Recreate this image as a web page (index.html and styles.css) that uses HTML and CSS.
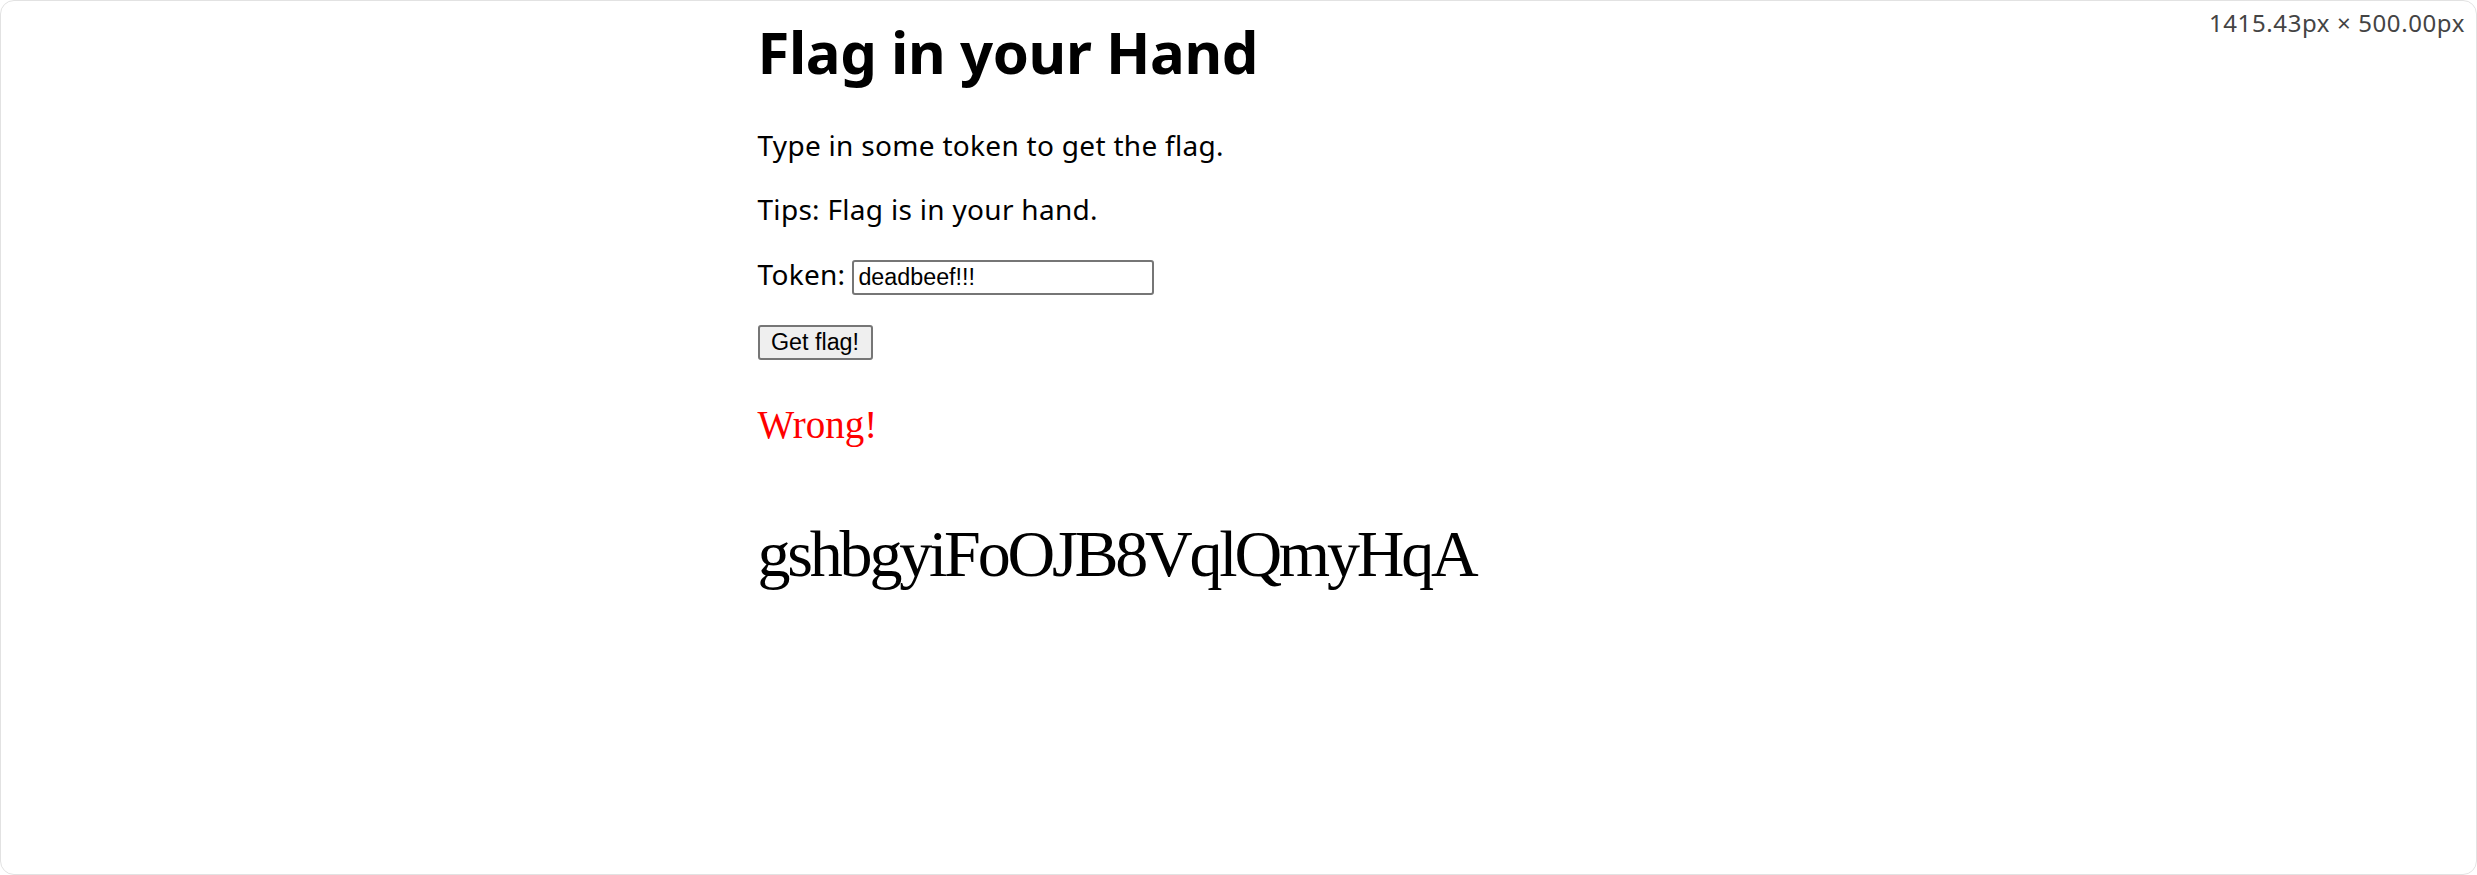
FILE: index.html
```html
<!DOCTYPE html>
<html lang="en">
<head>
<meta charset="utf-8">
<title>Flag in your Hand</title>
<link rel="stylesheet" href="styles.css">
</head>
<body>
<div class="window">
  <div class="dims">1415.43px × 500.00px</div>
  <main class="content">
    <h1 class="title">Flag in your Hand</h1>
    <p class="text p-first">Type in some token to get the flag.</p>
    <p class="text p-next">Tips: Flag is in your hand.</p>
    <div class="token-row">
      <label class="text" for="token">Token:</label>
      <input id="token" class="token-input" type="text" value="deadbeef!!!">
    </div>
    <div class="btn-row"><button class="btn" type="button">Get flag!</button></div>
    <p class="result">Wrong!</p>
    <p class="flag">gshbgyiFoOJB8VqlQmyHqA</p>
  </main>
</div>
</body>
</html>
```
FILE: styles.css
```css
html, body {
  margin: 0;
  padding: 0;
  background: #ffffff;
}
.window {
  position: relative;
  box-sizing: border-box;
  height: 875px;
  width: 2477px;
  border: 1px solid #e2e2e2;
  border-radius: 14px;
  background: #ffffff;
  overflow: hidden;
}
.dims {
  position: absolute;
  top: 8px;
  right: 11px;
  font-family: "Noto Sans", "Open Sans", sans-serif;
  font-size: 24px;
  line-height: 28px;
  letter-spacing: 0.6px;
  color: #444444;
}
.content {
  width: 962px;
  margin: 0 auto;
  display: flex;
  flex-direction: column;
  align-items: flex-start;
  padding-top: 10.5px;
}
.title {
  margin: 0;
  font-family: "Noto Sans", "Open Sans", sans-serif;
  font-weight: 700;
  font-size: 58px;
  line-height: 80px;
  letter-spacing: -0.4px;
  color: #000;
}
.text {
  font-family: "Noto Sans", "Open Sans", sans-serif;
  font-size: 28px;
  line-height: 38px;
  letter-spacing: 0.3px;
  color: #000;
  margin: 0;
}
.p-first { margin-top: 34px; }
.p-next { margin-top: 26.8px; }
.token-row {
  margin-top: 26.3px;
  display: flex;
  align-items: baseline;
  gap: 7px;
}
.token-input {
  box-sizing: border-box;
  width: 302px;
  height: 35px;
  padding: 2px 4px;
  border: 2px solid #767676;
  border-radius: 3px;
  font-family: "Liberation Sans", Arial, sans-serif;
  font-size: 23.3px;
  color: #000;
  background: #fff;
}
.btn-row { margin-top: 30px; display: flex; }
.btn {
  box-sizing: border-box;
  width: 115px;
  height: 35px;
  padding: 0 10px;
  border: 2px solid #767676;
  border-radius: 3px;
  background: #efefef;
  font-family: "Liberation Sans", Arial, sans-serif;
  font-size: 23.3px;
  color: #000;
}
.result {
  margin: 42.5px 0 0;
  font-family: "Liberation Serif", "Times New Roman", serif;
  font-size: 39px;
  line-height: 46px;
  color: #ff0000;
}
.flag {
  margin: 69px 0 0;
  font-family: "Liberation Serif", "Times New Roman", serif;
  font-size: 66px;
  line-height: 74px;
  letter-spacing: -3.2px;
  color: #000;
}
```
